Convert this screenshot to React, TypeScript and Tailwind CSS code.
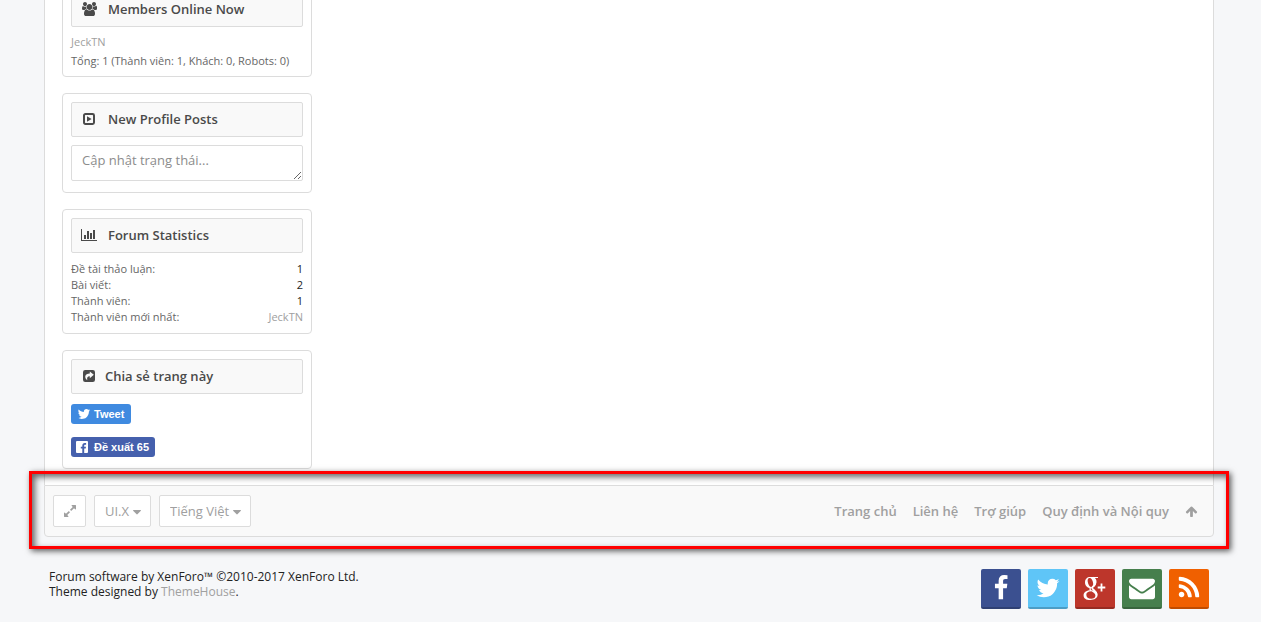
import type { ReactNode } from "react";

const ICONS = {
  users:
    "M593 896q-162 5-265 128h-134q-82 0-138-40.5t-56-118.5q0-353 124-353 6 0 43.5 21t97.5 42.5 119 21.5q67 0 133-23-5 37-5 66 0 159 93 286zm1071 637q0 120-73 189.5t-194 69.5h-874q-121 0-194-69.5t-73-189.5q0-53 3.5-103.5t14-109 26.5-108.5 43-97.5 62-81 85.5-53.5 111.5-20q10 0 43 21.5t73 48 107 48 135 21.5 135-21.5 107-48 73-48 43-21.5q61 0 111.5 20t85.5 53.5 62 81 43 97.5 26.5 108.5 14 109 3.5 103.5zm-1024-1277q0 106-75 181t-181 75-181-75-75-181 75-181 181-75 181 75 75 181zm704 384q0 159-112.5 271.5t-271.5 112.5-271.5-112.5-112.5-271.5 112.5-271.5 271.5-112.5 271.5 112.5 112.5 271.5zm576 225q0 78-56 118.5t-138 40.5h-134q-103-123-265-128 93-127 93-286 0-29-5-66 66 23 133 23 59 0 119-21.5t97.5-42.5 43.5-21q124 0 124 353zm-128-609q0 106-75 181t-181 75-181-75-75-181 75-181 181-75 181 75 75 181z",
  chart:
    "M640 896v512h-256v-512h256zm384-512v1024h-256v-1024h256zm1024 1152v128h-2048v-1536h128v1408h1920zm-640-896v768h-256v-768h256zm384-384v1152h-256v-1152h256z",
  expand:
    "M883 1056q0 13-10 23l-332 332 144 144q19 19 19 45t-19 45-45 19h-448q-26 0-45-19t-19-45v-448q0-26 19-45t45-19 45 19l144 144 332-332q10-10 23-10t23 10l114 114q10 10 10 23zm781-864v448q0 26-19 45t-45 19-45-19l-144-144-332 332q-10 10-23 10t-23-10l-114-114q-10-10-10-23t10-23l332-332-144-144q-19-19-19-45t19-45 45-19h448q26 0 45 19t19 45z",
  caret: "M1408 704q0 26-19 45l-448 448q-19 19-45 19t-45-19l-448-448q-19-19-19-45t19-45 45-19h896q26 0 45 19t19 45z",
  arrowUp:
    "M1675 971q0 51-37 90l-75 75q-38 38-91 38-54 0-90-38l-294-293v704q0 52-37.5 84.5t-90.5 32.5h-128q-53 0-90.5-32.5t-37.5-84.5v-704l-294 293q-36 38-90 38t-90-38l-75-75q-38-38-38-90 0-53 38-91l651-651q35-37 90-37 54 0 91 37l651 651q37 39 37 91z",
  facebook:
    "M1343 12v264h-157q-86 0-116 36t-30 108v189h293l-39 296h-254v759h-306v-759h-255v-296h255v-218q0-186 104-288.5t277-102.5q147 0 228 12z",
  twitter:
    "M1684 408q-67 98-162 167 1 14 1 42 0 130-38 259.5t-115.5 248.5-184.5 210.5-258 146-323 54.5q-271 0-496-145 35 4 78 4 225 0 401-138-105-2-188-64.5t-114-159.5q33 5 61 5 43 0 85-11-112-23-185.5-111.5t-73.5-205.5v-4q68 38 146 41-66-44-105-115t-39-154q0-88 44-163 121 149 294.5 238.5t371.5 99.5q-8-38-8-74 0-134 94.5-228.5t228.5-94.5q140 0 236 102 109-21 205-78-37 115-142 178 93-10 186-50z",
  envelope:
    "M1792 710v794q0 66-47 113t-113 47h-1472q-66 0-113-47t-47-113v-794q44 49 101 87 362 246 497 345 57 42 92.5 65.5t94.5 48 110 24.5h2q51 0 110-24.5t94.5-48 92.5-65.5q170-123 498-345 57-39 100-87zm0-294q0 79-49 151t-122 123q-376 261-468 325-10 7-42.5 31t-54 38.5-52 32.5-57.5 27-50 9h-2q-23 0-50-9t-57.5-27-52-32.5-54-38.5-42.5-31q-91-64-262-182.5t-205-142.5q-62-42-117-115.5t-55-136.5q0-78 41.5-130t118.5-52h1472q65 0 112.5 47t47.5 113z",
  rss: "M576 1344q0 80-56 136t-136 56-136-56-56-136 56-136 136-56 136 56 56 136zm512 123q2 28-17 48-18 21-47 21h-135q-25 0-43-16.5t-20-41.5q-22-229-184.5-391.5t-391.5-184.5q-25-2-41.5-20t-16.5-43v-135q0-29 21-47 17-17 43-17h5q160 13 306 80.5t259 181.5q114 113 181.5 259t80.5 306zm512 2q2 27-18 47-18 20-46 20h-143q-26 0-44.5-17.5t-19.5-42.5q-12-215-101-408.5t-231.5-336-336-231.5-408.5-102q-25-1-42.5-19.5t-17.5-43.5v-143q0-28 20-46 18-18 44-18h3q262 13 501.5 120t425.5 294q187 186 294 425.5t120 501.5z",
};

interface IconProps {
  name: keyof typeof ICONS;
  className: string;
  box?: string;
}

function Icon({ name, className, box = "0 0 1792 1792" }: IconProps) {
  return (
    <svg viewBox={box} className={className} fill="currentColor" aria-hidden="true">
      <path d={ICONS[name]} />
    </svg>
  );
}

function ProfileIcon() {
  return (
    <svg viewBox="0 0 12 12" className="size-3" aria-hidden="true">
      <rect x="1" y="1" width="10" height="10" rx="1.4" fill="none" stroke="currentColor" strokeWidth="2" />
      <path d="M4 3.2v5.6L8.6 6z" fill="currentColor" />
    </svg>
  );
}

function ShareIcon() {
  return (
    <svg viewBox="0 0 12 12" className="size-3" aria-hidden="true">
      <rect width="12" height="12" rx="2.2" fill="currentColor" />
      <path
        d="M6.8 1.4 10.8 4.8 6.8 8.2V6.2C4.6 6.100 3.700 7.400 4.300 10.200 1 7.600 1.600 3.400 6.800 3.400z"
        fill="#f9f9f9"
      />
    </svg>
  );
}

function GooglePlusIcon() {
  return (
    <svg viewBox="0 0 24 24" className="h-6 w-6" aria-hidden="true">
      <g fill="currentColor" fillRule="evenodd">
        <path d="M7.200 1C10.400 1 12.800 3.400 12.800 6.800S10.600 12 7.600 12 2 9.800 2 6.400 4.200 1 7.200 1zM6.600 2C5 2 4.400 3.500 4.700 5.600 5.100 8.600 6.400 11 8.100 11 9.800 11 10.500 9.400 10.100 7 9.600 4 8.400 2 6.600 2z" />
        <path d="M7.200 14.300c4.400 0 7.400 1.500 7.400 4.500 0 3.200-3.200 5.200-7.400 5.200S.6 22.200.6 19.400s2.600-5.100 6.600-5.100zM8.400 15.300c-3.200 0-5.100 1.300-5.100 3.500 0 2.500 2 4 4.900 4 2.600 0 4.200-1.100 4.200-3.200 0-2-1.600-3-4-4.300z" />
      </g>
      <g fill="none" stroke="currentColor">
        <path d="M7.200 1.500H15" strokeWidth="1" />
        <path d="M10 1.500c2 1.300 2.800 3 2.600 5-.2 3-3.400 3.600-3.400 5.400 0 1.900 4.200 2.700 4.300 6.500" strokeWidth="1.800" />
        <path d="M7.400 11.600c-.8 1.400-.4 2.400.8 3.200" strokeWidth="1.200" />
        <path d="M18.500 7.500v8M14.700 11.500h7.600" strokeWidth="1.800" />
      </g>
    </svg>
  );
}

interface WidgetProps {
  title: string;
  icon: ReactNode;
  children: ReactNode;
}

function Widget({ title, icon, children }: WidgetProps) {
  return (
    <section className="rounded border border-[#dcdcdc] bg-white p-2">
      <h3 className="mb-2 flex h-[35px] items-center gap-[10px] rounded-xs border border-[#dcdcdc] bg-[#f9f9f9] px-2 pb-[2px] text-[13px] font-semibold text-[#4a4a4a]">
        <span className="flex w-[18px] justify-center">{icon}</span>
        {title}
      </h3>
      {children}
    </section>
  );
}

const stats = [
  { label: "Đề tài thảo luận:", value: "1" },
  { label: "Bài viết:", value: "2" },
  { label: "Thành viên:", value: "1" },
];

const footerLinks = ["Trang chủ", "Liên hệ", "Trợ giúp", "Quy định và Nội quy"];

function Chooser({ label, value }: { label: string; value: string }) {
  return (
    <div className="relative flex">
      <select
        aria-label={label}
        className="h-8 appearance-none rounded-xs border border-[#dcdcdc] bg-white pt-[2px] pr-[20px] pl-[10px] text-[13px] text-[#a0a0a0]"
      >
        <option>{value}</option>
      </select>
      <Icon name="caret" className="pointer-events-none absolute top-[10px] right-[7px] size-[14px] text-[#a0a0a0]" />
    </div>
  );
}

function SocialLink({ label, color, children }: { label: string; color: string; children: ReactNode }) {
  return (
    <a
      href="#"
      aria-label={label}
      className={`flex size-10 items-center justify-center rounded-xs border-b-2 border-black/20 text-white ${color}`}
    >
      {children}
    </a>
  );
}

export default function App() {
  return (
    <div className="min-h-screen overflow-hidden bg-[#f6f7f9] pr-[47px] pl-11 font-['Open_Sans',sans-serif]">
      <main className="border-x border-[#dcdcdc] bg-white px-[17px] pb-4">
        <aside className="flex w-[250px] flex-col gap-4 text-[11px] leading-4 text-[#666]">
          <div className="-mt-[17px]">
            <Widget title="Members Online Now" icon={<Icon name="users" box="0 0 1920 1792" className="h-[14px] w-[15px]" />}>
              <a href="#" className="block leading-[14px] text-[#a0a0a0]">
                JeckTN
              </a>
              <p className="mt-[5px] leading-[14px]">Tổng: 1 (Thành viên: 1, Khách: 0, Robots: 0)</p>
            </Widget>
          </div>

          <Widget title="New Profile Posts" icon={<ProfileIcon />}>
            <textarea
              aria-label="Cập nhật trạng thái"
              placeholder="Cập nhật trạng thái..."
              className="mb-[3px] block h-9 w-full resize overflow-hidden rounded-xs border border-[#dcdcdc] px-[10px] py-[5px] text-[13px] leading-[18px] placeholder:text-[#8c8c8c]"
            />
          </Widget>

          <Widget title="Forum Statistics" icon={<Icon name="chart" box="0 0 2048 1792" className="h-[14px] w-4" />}>
            <dl>
              {stats.map((row) => (
                <div key={row.label} className="flex justify-between">
                  <dt>{row.label}</dt>
                  <dd className="text-[#222]">{row.value}</dd>
                </div>
              ))}
              <div className="flex justify-between">
                <dt>Thành viên mới nhất:</dt>
                <dd>
                  <a href="#" className="text-[#a0a0a0]">
                    JeckTN
                  </a>
                </dd>
              </div>
            </dl>
          </Widget>

          <section className="rounded border border-[#dcdcdc] bg-white px-2 pt-2 pb-[11px]">
            <h3 className="mb-[10px] flex h-[35px] items-center gap-[7px] rounded-xs border border-[#dcdcdc] bg-[#f9f9f9] px-2 pb-[2px] text-[13px] font-semibold text-[#4a4a4a]">
              <span className="flex w-[18px] justify-center">
                <ShareIcon />
              </span>
              Chia sẻ trang này
            </h3>
            <div className="flex flex-col items-start gap-[13px] font-['Liberation_Sans',sans-serif] text-[11px] font-bold text-white">
              <button className="flex h-5 items-center gap-[3px] rounded-[3px] bg-[#3f8ae0] pr-[7px] pl-[6px]">
                <Icon name="twitter" className="size-[14px]" />
                Tweet
              </button>
              <button className="flex h-5 items-center gap-[6px] rounded-[3px] bg-[#4560ad] pr-[6px] pl-[5px]">
                <svg viewBox="0 0 12 12" className="size-3" aria-hidden="true">
                  <rect width="12" height="12" rx="1" fill="#fff" />
                  <path d="M6.300 12V7.600H4.800V5.800h1.500V4.500c0-1.600 1-2.500 2.400-2.500h1.400v1.700h-.9c-.8 0-1 .4-1 1v1.100h1.800l-.3 1.800H8.200V12z" fill="#4560ad" />
                </svg>
                Đề xuất 65
              </button>
            </div>
          </section>
        </aside>
      </main>

      <div className="relative">
        <nav className="flex h-[52px] items-center justify-between rounded-b border border-[#dcdcdc] bg-[#f9f9f9] px-2 text-[13px] text-[#a0a0a0]">
          <div className="flex gap-2">
            <button
              aria-label="Toggle width"
              className="flex h-8 w-[33px] items-center justify-center rounded-xs border border-[#dcdcdc] bg-white"
            >
              <Icon name="expand" className="size-[14px]" />
            </button>
            <Chooser label="Style" value="UI.X" />
            <Chooser label="Language" value="Tiếng Việt" />
          </div>
          <div className="flex items-center gap-4 pt-px pr-[7px] font-semibold">
            {footerLinks.map((link) => (
              <a key={link} href="#">
                {link}
              </a>
            ))}
            <a href="#" aria-label="Top">
              <Icon name="arrowUp" className="size-[13px]" />
            </a>
          </div>
        </nav>
        {/* highlight frame around the footer bar */}
        <div className="pointer-events-none absolute -top-[14px] -right-[15px] -bottom-3 -left-[15px] border-3 border-[#ff0000] shadow-[2px_2px_6px_rgba(0,0,0,0.65),inset_3px_3px_6px_rgba(0,0,0,0.6)]" />
      </div>

      <footer className="flex items-start justify-between px-[5px] pt-8">
        <p className="text-[12px] leading-[15px] text-[#222]">
          Forum software by XenForo™ ©2010-2017 XenForo Ltd.
          <br />
          Theme designed by{" "}
          <a href="#" className="text-[#a0a0a0]">
            ThemeHouse
          </a>
          .
        </p>
        <div className="flex gap-[7px]">
          <SocialLink label="Facebook" color="bg-[#3b5090]">
            <Icon name="facebook" className="size-[26px]" />
          </SocialLink>
          <SocialLink label="Twitter" color="bg-[#5fc5f7]">
            <Icon name="twitter" className="size-[26px]" />
          </SocialLink>
          <SocialLink label="Google+" color="bg-[#bd362b]">
            <GooglePlusIcon />
          </SocialLink>
          <SocialLink label="Email" color="bg-[#467f4d]">
            <Icon name="envelope" className="size-[26px]" />
          </SocialLink>
          <SocialLink label="RSS" color="bg-[#f06000]">
            <Icon name="rss" className="size-[26px]" />
          </SocialLink>
        </div>
      </footer>
    </div>
  );
}
